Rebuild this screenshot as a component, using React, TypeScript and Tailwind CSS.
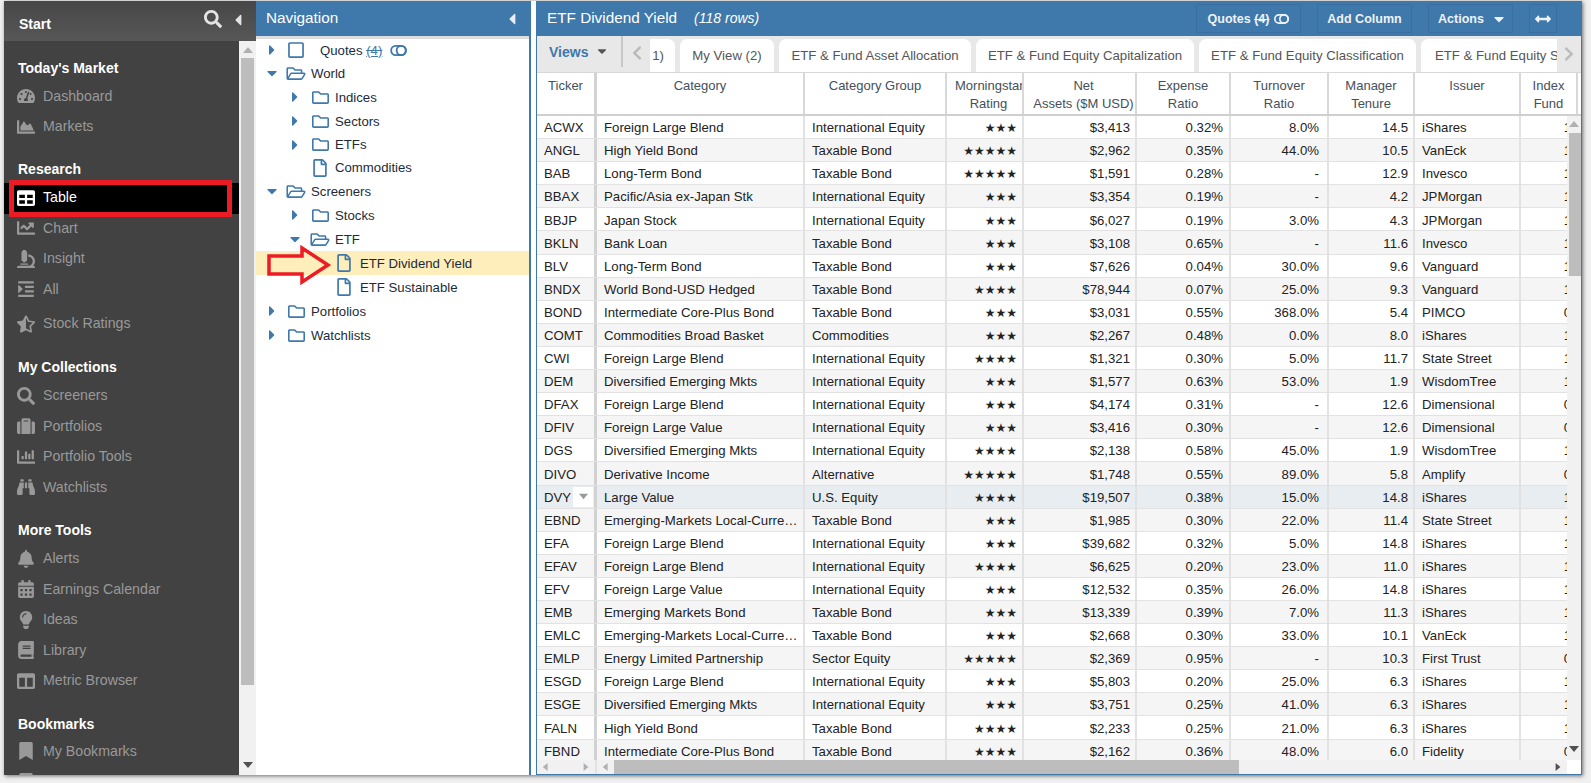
import React from "react";
import {
  FaSearch, FaCaretLeft, FaCaretRight, FaCaretDown, FaTachometerAlt, FaChartArea, FaTable, FaChartLine,
  FaMicroscope, FaIndent, FaStarHalfAlt, FaSuitcase, FaChartBar, FaBinoculars, FaBell, FaCalendarAlt,
  FaLightbulb, FaBook, FaColumns, FaBookmark, FaRegFolder, FaRegFolderOpen, FaRegFile, FaRegSquare,
  FaChevronLeft, FaChevronRight, FaArrowsAltH,
} from "react-icons/fa";

const ROWS: [string, string, string, number, string, string, string, string, string, string][] = [
  ["ACWX", "Foreign Large Blend", "International Equity", 3, "$3,413", "0.32%", "8.0%", "14.5", "iShares", "1"],
  ["ANGL", "High Yield Bond", "Taxable Bond", 5, "$2,962", "0.35%", "44.0%", "10.5", "VanEck", "1"],
  ["BAB", "Long-Term Bond", "Taxable Bond", 5, "$1,591", "0.28%", "-", "12.9", "Invesco", "1"],
  ["BBAX", "Pacific/Asia ex-Japan Stk", "International Equity", 3, "$3,354", "0.19%", "-", "4.2", "JPMorgan", "1"],
  ["BBJP", "Japan Stock", "International Equity", 3, "$6,027", "0.19%", "3.0%", "4.3", "JPMorgan", "1"],
  ["BKLN", "Bank Loan", "Taxable Bond", 3, "$3,108", "0.65%", "-", "11.6", "Invesco", "1"],
  ["BLV", "Long-Term Bond", "Taxable Bond", 3, "$7,626", "0.04%", "30.0%", "9.6", "Vanguard", "1"],
  ["BNDX", "World Bond-USD Hedged", "Taxable Bond", 4, "$78,944", "0.07%", "25.0%", "9.3", "Vanguard", "1"],
  ["BOND", "Intermediate Core-Plus Bond", "Taxable Bond", 3, "$3,031", "0.55%", "368.0%", "5.4", "PIMCO", "0"],
  ["COMT", "Commodities Broad Basket", "Commodities", 3, "$2,267", "0.48%", "0.0%", "8.0", "iShares", "1"],
  ["CWI", "Foreign Large Blend", "International Equity", 4, "$1,321", "0.30%", "5.0%", "11.7", "State Street", "1"],
  ["DEM", "Diversified Emerging Mkts", "International Equity", 3, "$1,577", "0.63%", "53.0%", "1.9", "WisdomTree", "1"],
  ["DFAX", "Foreign Large Blend", "International Equity", 3, "$4,174", "0.31%", "-", "12.6", "Dimensional", "0"],
  ["DFIV", "Foreign Large Value", "International Equity", 3, "$3,416", "0.30%", "-", "12.6", "Dimensional", "0"],
  ["DGS", "Diversified Emerging Mkts", "International Equity", 4, "$2,138", "0.58%", "45.0%", "1.9", "WisdomTree", "1"],
  ["DIVO", "Derivative Income", "Alternative", 5, "$1,748", "0.55%", "89.0%", "5.8", "Amplify", "0"],
  ["DVY", "Large Value", "U.S. Equity", 4, "$19,507", "0.38%", "15.0%", "14.8", "iShares", "1"],
  ["EBND", "Emerging-Markets Local-Currency Bond", "Taxable Bond", 3, "$1,985", "0.30%", "22.0%", "11.4", "State Street", "1"],
  ["EFA", "Foreign Large Blend", "International Equity", 3, "$39,682", "0.32%", "5.0%", "14.8", "iShares", "1"],
  ["EFAV", "Foreign Large Blend", "International Equity", 4, "$6,625", "0.20%", "23.0%", "11.0", "iShares", "1"],
  ["EFV", "Foreign Large Value", "International Equity", 3, "$12,532", "0.35%", "26.0%", "14.8", "iShares", "1"],
  ["EMB", "Emerging Markets Bond", "Taxable Bond", 3, "$13,339", "0.39%", "7.0%", "11.3", "iShares", "1"],
  ["EMLC", "Emerging-Markets Local-Currency Bond", "Taxable Bond", 3, "$2,668", "0.30%", "33.0%", "10.1", "VanEck", "1"],
  ["EMLP", "Energy Limited Partnership", "Sector Equity", 5, "$2,369", "0.95%", "-", "10.3", "First Trust", "0"],
  ["ESGD", "Foreign Large Blend", "International Equity", 3, "$5,803", "0.20%", "25.0%", "6.3", "iShares", "1"],
  ["ESGE", "Diversified Emerging Mkts", "International Equity", 3, "$3,751", "0.25%", "41.0%", "6.3", "iShares", "1"],
  ["FALN", "High Yield Bond", "Taxable Bond", 4, "$2,233", "0.25%", "21.0%", "6.3", "iShares", "1"],
  ["FBND", "Intermediate Core-Plus Bond", "Taxable Bond", 4, "$2,162", "0.36%", "48.0%", "6.0", "Fidelity", "0"],
];

function Toggle({ className }: { className: string }) {
  return (
    <svg viewBox="0 0 18 12" className={className} fill="none" stroke="currentColor" strokeWidth="2">
      <rect x="1" y="1" width="16" height="10" rx="5" />
      <circle cx="12" cy="6" r="5" />
    </svg>
  );
}

function Arrow({ dir, className }: { dir: "up" | "down" | "left" | "right"; className?: string }) {
  const pts = { up: "5,1 10,7 0,7", down: "0,2 10,2 5,8", left: "7,0 7,10 1,5", right: "2,0 2,10 8,5" }[dir];
  return (
    <svg viewBox="0 0 10 10" className={className ?? "w-[10px] h-[10px] text-[#9a9a9a]"} fill="currentColor">
      <polygon points={pts} />
    </svg>
  );
}

function SideItem({ icon, label, active, extra }: { icon: React.ReactNode; label: string; active?: boolean; extra?: string }) {
  return (
    <div className={`flex items-center h-[30.5px] pl-[12px] pb-[2px] text-[14.2px] ${active ? "bg-black text-white" : "text-[#999999]"} ${extra ?? ""}`}>
      <span className="w-[20px] h-[20px] flex items-center justify-center text-[18px] mr-[7px]">{icon}</span>
      <span>{label}</span>
    </div>
  );
}

function SideHead({ label, extra }: { label: string; extra: string }) {
  return <div className={`h-[27px] flex items-center pl-[14px] pb-px text-[14px] font-bold text-white ${extra}`}>{label}</div>;
}

function Sidebar() {
  return (
    <div className="relative w-[252px] shrink-0 flex flex-col bg-[#424242]">
      <div className="h-[40px] shrink-0 flex items-center pl-[15px] bg-gradient-to-b from-[#474747] to-[#575757] text-white font-bold text-[14px]">
        <span className="flex-1 pt-[6px]">Start</span>
        <FaSearch className="w-[18px] h-[18px] text-[#e4e4e4] mr-[9px] mb-[4px]" />
        <FaCaretLeft className="w-[14px] h-[18px] text-[#e4e4e4] mr-[11px] mb-[3px]" />
      </div>
      <div className="flex-1 flex min-h-0">
        <div className="w-[235px] overflow-hidden">
          <SideHead label="Today's Market" extra="mt-[14px]" />
          <SideItem icon={<FaTachometerAlt />} label="Dashboard" />
          <SideItem icon={<FaChartArea />} label="Markets" />
          <SideHead label="Research" extra="mt-[13px]" />
          <SideItem icon={<FaTable />} label="Table" active extra="!h-[31px]" />
          <SideItem icon={<FaChartLine />} label="Chart" />
          <SideItem icon={<FaMicroscope />} label="Insight" />
          <SideItem icon={<FaIndent />} label="All" />
          <SideItem icon={<FaStarHalfAlt />} label="Stock Ratings" extra="mt-[4px]" />
          <SideHead label="My Collections" extra="mt-[14.5px]" />
          <SideItem icon={<FaSearch />} label="Screeners" />
          <SideItem icon={<FaSuitcase />} label="Portfolios" />
          <SideItem icon={<FaChartBar />} label="Portfolio Tools" />
          <SideItem icon={<FaBinoculars />} label="Watchlists" />
          <SideHead label="More Tools" extra="mt-[14px]" />
          <SideItem icon={<FaBell />} label="Alerts" />
          <SideItem icon={<FaCalendarAlt />} label="Earnings Calendar" />
          <SideItem icon={<FaLightbulb />} label="Ideas" />
          <SideItem icon={<FaBook />} label="Library" />
          <SideItem icon={<FaColumns />} label="Metric Browser" />
          <SideHead label="Bookmarks" extra="mt-[14.5px]" />
          <SideItem icon={<FaBookmark />} label="My Bookmarks" extra="-mt-[1.5px]" />
          <SideItem icon={<FaBookmark />} label="" />
        </div>
        <div className="w-[17px] bg-[#f1f1f1] flex flex-col items-center pt-[5px]">
          <Arrow dir="up" className="w-[10px] h-[10px] text-[#b0b0b0] mb-[2px]" />
          <div className="w-[13px] h-[627px] bg-[#bdbdbd]" />
          <Arrow dir="down" className="w-[10px] h-[10px] text-[#505050] mt-[75px]" />
        </div>
      </div>
      <div className="absolute left-[5px] top-[179px] w-[223px] h-[37px] border-[5px] border-[#ed1c24]" />
    </div>
  );
}

function TreeRow({ h, pl, caret, icon, label, selected, gap }: { h: string; pl: string; caret?: "right" | "down"; icon: React.ReactNode; label: React.ReactNode; selected?: boolean; gap: string }) {
  return (
    <div className={`flex items-center ${h} ${pl} ${selected ? "bg-[#fdeebb]" : ""}`}>
      <span className="w-[16px] flex justify-center text-[#3f78ab] text-[16px]">
        {caret === "right" && <FaCaretRight />}
        {caret === "down" && <FaCaretDown />}
      </span>
      <span className={`flex justify-center text-[#3f78ab] ${gap}`}>{icon}</span>
      <span className="text-[13.2px] pt-px text-[#1c2b3a] whitespace-nowrap">{label}</span>
    </div>
  );
}

function NavPanel() {
  const closed = <FaRegFolder className="w-[19px] h-[17px]" />;
  const open = <FaRegFolderOpen className="w-[20px] h-[17px]" />;
  const file = <FaRegFile className="w-[14px] h-[18px]" />;
  return (
    <div className="relative w-[275px] shrink-0 flex flex-col bg-white border-r-2 border-[#3f78ab]">
      <div className="h-[35px] shrink-0 bg-[#3f78ab] flex items-center pl-[10px] pr-[10px] text-white text-[15.3px]">
        <span className="flex-1">Navigation</span>
        <FaCaretLeft className="w-[14px] h-[18px] text-[#e8eef5]" />
      </div>
      <div className="h-[3px] shrink-0 bg-[#dddddd]" />
      <TreeRow h="h-[22px]" pl="pl-[8px]" caret="right" icon={<FaRegSquare className="w-[18px] h-[18px]" />} gap="w-[20px] ml-[6px] mr-[14px]" label={
        <span className="flex items-center">Quotes&nbsp;<span className="text-[#3f78ab] [text-decoration-line:underline_line-through]">(4)</span>
          <Toggle className="w-[17px] h-[11px] ml-[8px] text-[#3f78ab]" /></span>} />
      <TreeRow h="h-[24px]" pl="pl-[8px]" caret="down" icon={open} gap="w-[20px] ml-[6px] mr-[5px]" label="World" />
      <TreeRow h="h-[24px]" pl="pl-[31px]" caret="right" icon={closed} gap="w-[20px] ml-[7px] mr-[5px]" label="Indices" />
      <TreeRow h="h-[24px]" pl="pl-[31px]" caret="right" icon={closed} gap="w-[20px] ml-[7px] mr-[5px]" label="Sectors" />
      <TreeRow h="h-[23px]" pl="pl-[31px]" caret="right" icon={closed} gap="w-[20px] ml-[7px] mr-[5px]" label="ETFs" />
      <TreeRow h="h-[23px]" pl="pl-[31px]" icon={file} gap="w-[20px] ml-[7px] mr-[5px]" label="Commodities" />
      <TreeRow h="h-[24px]" pl="pl-[8px]" caret="down" icon={open} gap="w-[20px] ml-[6px] mr-[5px]" label="Screeners" />
      <TreeRow h="h-[24px]" pl="pl-[31px]" caret="right" icon={closed} gap="w-[20px] ml-[7px] mr-[5px]" label="Stocks" />
      <TreeRow h="h-[24px]" pl="pl-[31px]" caret="down" icon={open} gap="w-[20px] ml-[7px] mr-[5px]" label="ETF" />
      <TreeRow h="h-[24px]" pl="pl-[55px]" icon={file} gap="w-[20px] ml-[7px] mr-[6px]" label="ETF Dividend Yield" selected />
      <TreeRow h="h-[24px]" pl="pl-[55px]" icon={file} gap="w-[20px] ml-[7px] mr-[6px]" label="ETF Sustainable" />
      <TreeRow h="h-[24px]" pl="pl-[8px]" caret="right" icon={closed} gap="w-[20px] ml-[6px] mr-[5px]" label="Portfolios" />
      <TreeRow h="h-[24px]" pl="pl-[8px]" caret="right" icon={closed} gap="w-[20px] ml-[6px] mr-[5px]" label="Watchlists" />
      <svg className="absolute left-[10px] top-[244px] w-[66px] h-[40px]" viewBox="0 0 66 40" fill="none" stroke="#ed1c24" strokeWidth="3.5">
        <polygon points="3,11 36,11 36,3 62,20 36,37 36,29 3,29" />
      </svg>
    </div>
  );
}

function TopButton({ w, ml, children }: { w: string; ml: string; children: React.ReactNode }) {
  return (
    <div className={`${w} ${ml} h-[29px] flex items-center justify-center pt-px border border-[#3a6f9f] text-[12.5px] font-bold text-[#eef3f8]`}>
      {children}
    </div>
  );
}

function Tab({ w, children, extra }: { w: string; children: React.ReactNode; extra?: string }) {
  return (
    <div className={`${w} h-[33px] shrink-0 bg-white rounded-t-[7px] flex items-center justify-center pt-px text-[13.2px] text-[#555555] whitespace-nowrap overflow-hidden ${extra ?? ""}`}>
      {children}
    </div>
  );
}

const WIDTHS = ["w-[60px]", "w-[208px]", "w-[142px]", "w-[77px]", "w-[113px]", "w-[94px]", "w-[98px]", "w-[86px]", "w-[106px]", "w-[57px]"];
const CELL = ["pl-[7px]", "pl-[7px] pr-[5px]", "pl-[7px]", "text-right pr-[5px]", "text-right pr-[5px]", "text-right pr-[6px]", "text-right pr-[8px]", "text-right pr-[5px]", "pl-[7px]", "text-right pr-[5px]"];
const HEADPAD = ["", "", "", "pl-[8px]", "pl-[8px]", "", "", "", "", ""];
const HEADS: React.ReactNode[] = [
  "Ticker", "Category", "Category Group",
  <>Morningstar<br />Rating</>,
  <>Net<br />Assets ($M USD)</>,
  <>Expense<br />Ratio</>,
  <>Turnover<br />Ratio</>,
  <>Manager<br />Tenure</>,
  "Issuer",
  <>Index<br />Fund</>,
];

function Row({ r, i }: { r: (typeof ROWS)[number]; i: number }) {
  const dvy = r[0] === "DVY";
  const bg = dvy ? "bg-[#e8edf1]" : i % 2 === 0 ? "bg-white" : "bg-[#f5f5f5]";
  const cells: React.ReactNode[] = [
    r[0], r[1], r[2],
    <span className="[font-family:DejaVu_Sans,sans-serif] text-[12px]">{"★".repeat(r[3])}</span>,
    r[4], r[5], r[6], r[7], r[8], r[9],
  ];
  return (
    <div className={`relative flex h-[23.1px] items-stretch border-b border-[#e2e2e2] ${bg}`}>
      {cells.map((c, k) => (
        <div key={k} className={`${WIDTHS[k]} shrink-0 flex items-center min-w-0 pt-[2px] ${k === 0 ? "border-r-[3px] border-[#d2d2d2]" : "border-r-2 border-[#e2e2e2]"} ${CELL[k]}`}>
          <span className={`block w-full truncate ${k > 2 && k !== 8 ? "text-right" : ""}`}>{c}</span>
        </div>
      ))}
      {dvy && (
        <div className="absolute left-[36px] top-[1px] w-[20px] h-[20px] bg-white flex items-center justify-center">
          <Arrow dir="down" className="w-[9px] h-[9px] text-[#999999]" />
        </div>
      )}
    </div>
  );
}

function MainPanel() {
  return (
    <div className="relative w-[1046px] shrink-0 flex flex-col bg-white border-x border-b border-[#3f78ab] ml-[5px]">
      <div className="h-[35px] shrink-0 bg-[#3f78ab] flex items-center pl-[10px] text-white">
        <span className="text-[15.3px]">ETF Dividend Yield</span>
        <span className="text-[14px] italic ml-[17px] flex-1">(118 rows)</span>
        <TopButton w="w-[105px]" ml="">Quotes&nbsp;<span className="line-through">(4)</span><Toggle className="w-[15px] h-[10px] ml-[5px]" /></TopButton>
        <TopButton w="w-[95px]" ml="ml-[16px]">Add Column</TopButton>
        <TopButton w="w-[85px]" ml="ml-[16px]"><span className="pl-[3px]">Actions</span><FaCaretDown className="ml-[8px] w-[14px] h-[16px]" /></TopButton>
        <TopButton w="w-[28px]" ml="ml-[16px]"><FaArrowsAltH className="w-[20px] h-[16px]" /></TopButton>
        <div className="w-[24px]" />
      </div>
      <div className="h-[36px] shrink-0 bg-[#e8e8e8] flex items-end">
        <div className="w-[84px] h-[36px] flex items-start pt-[6px] pl-[12px] text-[14px] font-bold text-[#3f78ab]">
          Views<FaCaretDown className="ml-[8px] mt-[2px] w-[12px] h-[14px] text-[#555555]" />
        </div>
        <div className="w-[2px] h-[31px] mb-[5px] bg-[#c8c8c8]" />
        <div className="w-[27px] h-[36px] flex items-start justify-center pt-[9px]">
          <FaChevronLeft className="w-[12px] h-[16px] text-[#bbbbbb]" />
        </div>
        <div className="flex gap-[5px] w-[907px] overflow-hidden">
          <Tab w="w-[25px]" extra="!justify-end rounded-tl-none pr-[11px]">1)</Tab>
          <Tab w="w-[94px]">My View (2)</Tab>
          <Tab w="w-[192px]">ETF &amp; Fund Asset Allocation</Tab>
          <Tab w="w-[218px]">ETF &amp; Fund Equity Capitalization</Tab>
          <Tab w="w-[217px]">ETF &amp; Fund Equity Classification</Tab>
          <Tab w="w-[180px]" extra="!justify-start pl-[14px]">ETF &amp; Fund Equity Style</Tab>
        </div>
        <div className="flex-1 h-[36px] flex items-start justify-center pt-[10px]">
          <FaChevronRight className="w-[12px] h-[16px] text-[#bbbbbb]" />
        </div>
      </div>
      <div className="flex h-[42px] shrink-0 border-t border-[#d8d8d8] text-[13px] leading-[18px] text-[#44505c]">
        {HEADS.map((h, k) => (
          <div key={k} className={`${WIDTHS[k]} ${HEADPAD[k]} shrink-0 text-center pt-[4px] whitespace-nowrap overflow-hidden ${k === 0 ? "border-r-[3px] border-[#d2d2d2]" : "border-r-2 border-[#d8d8d8]"}`}>{h}</div>
        ))}
      </div>
      <div className="h-[2px] shrink-0 bg-[#cfcfcf]" />
      <div className="h-[644px] shrink-0 overflow-hidden text-[13.2px] text-[#222222]">
        {ROWS.map((r, i) => <Row key={r[0]} r={r} i={i} />)}
      </div>
      <div className="absolute right-0 top-[115px] w-[14px] h-[644px] bg-[#f1f1f1] flex flex-col items-center">
        <Arrow dir="up" className="w-[10px] h-[10px] text-[#b0b0b0] mt-[4px] mb-[3px]" />
        <div className="w-[12px] h-[143px] ml-[2px] bg-[#bdbdbd]" />
        <Arrow dir="down" className="w-[10px] h-[10px] text-[#505050] mt-[468px]" />
      </div>
      <div className="h-[14px] shrink-0 flex">
        <div className="w-[58px] bg-[#f1f1f1] flex items-center justify-between px-[5px]">
          <Arrow dir="left" className="w-[8px] h-[8px] text-[#b0b0b0]" />
          <Arrow dir="right" className="w-[8px] h-[8px] text-[#b0b0b0]" />
        </div>
        <div className="w-[2px] bg-[#e2e2e2]" />
        <div className="w-[970px] bg-[#f1f1f1] flex items-center">
          <div className="w-[17px] flex justify-center"><Arrow dir="left" className="w-[8px] h-[8px] text-[#b0b0b0]" /></div>
          <div className="w-[625px] h-full bg-[#bdbdbd]" />
          <div className="flex-1 flex justify-end pr-[5px]"><Arrow dir="right" className="w-[8px] h-[8px] text-[#505050]" /></div>
        </div>
      </div>
    </div>
  );
}

export default function App() {
  return (
    <div className="w-[1591px] h-[783px] overflow-hidden bg-[#f0f0f0] pl-[4px] pt-px [font-family:Liberation_Sans,Arial,sans-serif]">
      <div className="flex w-[1578px] h-[774px] bg-white shadow-[1px_1px_4px_rgba(0,0,0,0.55)]">
        <Sidebar />
        <NavPanel />
        <MainPanel />
      </div>
    </div>
  );
}
